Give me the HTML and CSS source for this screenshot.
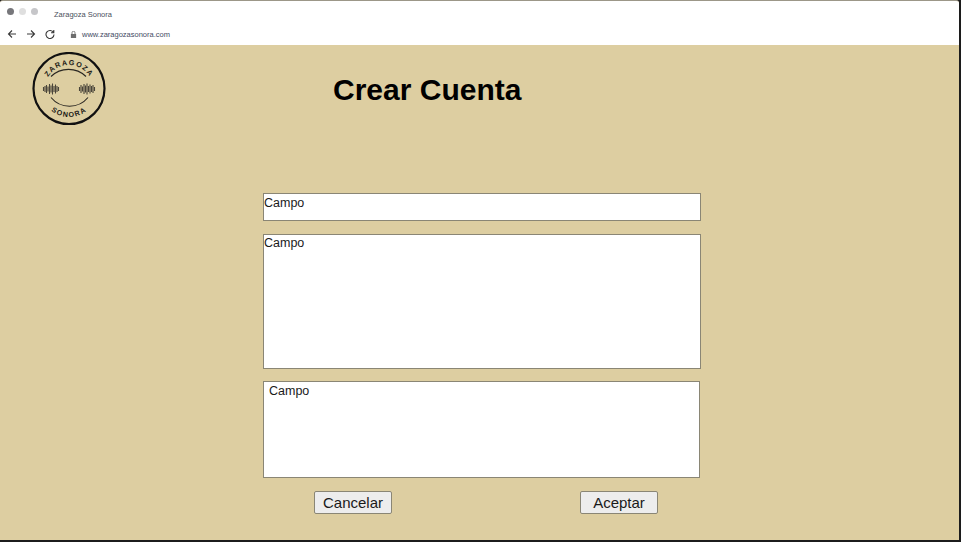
FILE: index.html
```html
<!DOCTYPE html>
<html lang="es">
<head>
<meta charset="utf-8">
<title>Zaragoza Sonora</title>
<link rel="stylesheet" href="styles.css">
</head>
<body>
<div class="window">
  <header class="chrome">
    <div class="tabbar">
      <div class="dots"><span class="dot dot-dark"></span><span class="dot"></span><span class="dot dot-mid"></span></div>
      <span class="tabtitle">Zaragoza Sonora</span>
    </div>
    <div class="urlbar">
      <svg class="navicon" viewBox="0 0 10 10"><path d="M9 5H1.500M5 1.500 1.500 5 5 8.500"/></svg>
      <svg class="navicon" viewBox="0 0 10 10"><path d="M1 5h7.500M5 1.500 8.500 5 5 8.500"/></svg>
      <svg class="navicon" viewBox="0 0 10 10"><path d="M8.500 3.500A4 4 0 1 0 9 5.500M8.800 1v2.800H6"/></svg>
      <svg class="lock" viewBox="0 0 8 8"><path class="lock-body" d="M1 3.500h6V8H1z"/><path class="lock-bow" d="M2.300 3.500V2a1.700 1.700 0 0 1 3.400 0v1.500"/></svg>
      <span class="url">www.zaragozasonora.com</span>
    </div>
  </header>
  <main class="page">
    <div class="head">
      <svg class="logo" viewBox="0 0 74 74">
        <defs>
          <path id="arc-top" d="M13 37a24 24 0 0 1 48 0"/>
          <path id="arc-bottom" d="M9 37a28 28 0 0 0 56 0"/>
        </defs>
        <circle class="ring" cx="37" cy="36.500" r="35.500"/>
        <text class="logotext"><textPath href="#arc-top" startOffset="50%" text-anchor="middle">ZARAGOZA</textPath></text>
        <text class="logotext"><textPath href="#arc-bottom" startOffset="50%" text-anchor="middle">SONORA</textPath></text>
        <path class="inner" d="M19 24.500A25 25 0 0 1 54 24.500M19 45.500A24 24 0 0 0 56 45.500"/>
        <path class="wave" d="M11.500 35v4M13 34v6M14.500 33v8M16 34.500v5M17.500 32v10M19 33.500v7M20.500 31.500v11M22 34v6M23.500 32.500v9M25 34v6M26.500 35v4M47.500 35v4M49 33v8M50.500 34.500v5M52 32v10M53.500 33.500v7M55 31.500v11M56.500 34v6M58 32.500v9M59.500 34v6M61 33v8M62.500 35v4"/>
      </svg>
      <h1 class="title">Crear Cuenta</h1>
    </div>
    <form class="form">
      <div class="field field-short">Campo</div>
      <div class="field field-tall">Campo</div>
      <div class="field field-mid">Campo</div>
      <div class="actions">
        <button class="btn" type="button">Cancelar</button>
        <button class="btn" type="button">Aceptar</button>
      </div>
    </form>
  </main>
</div>
</body>
</html>
```
FILE: styles.css
```css
* { box-sizing: border-box; }
html, body { margin: 0; height: 100%; overflow: hidden; }
body { font-family: "Liberation Sans", Arial, sans-serif; color: #111; background: #1c1c1c; }

.window {
  width: 959px;
  height: 540px;
  display: flex;
  flex-direction: column;
  background: #ddcea1;
  border-top: 1px solid #9c9788;
  border-radius: 3px 3px 0 0;
  overflow: hidden;
}

.chrome { height: 44px; background: #fff; flex: none; }
.tabbar { height: 23px; display: flex; align-items: center; padding-left: 7px; }
.dots { display: flex; gap: 5px; width: 47px; margin-top: -2px; }
.dot { width: 7px; height: 7px; border-radius: 50%; background: #dfdfdf; }
.dot-dark { background: #77777b; }
.dot-mid { background: #c6c6c9; }
.tabtitle { font-size: 7.500px; color: #4a4f5c; margin-top: 4px; }

.urlbar { height: 20px; display: flex; align-items: center; padding-left: 7px; }
.navicon { width: 10px; height: 10px; margin-right: 9px; fill: none; stroke: #3a3a3a; stroke-width: 1.100; }
.lock { width: 7px; height: 7px; margin-left: 6px; margin-right: 5px; }
.lock-body { fill: #6d6d6d; }
.lock-bow { fill: none; stroke: #6d6d6d; }
.url { font-size: 7.500px; color: #3f4a63; }

.page { flex: 1; min-height: 0; display: flex; flex-direction: column; }

.head { display: flex; align-items: flex-start; height: 148px; padding: 7px 0 0 32px; flex: none; }
.logo { width: 74px; height: 74px; flex: none; }
.ring { fill: none; stroke: #111; stroke-width: 2.200; }
.inner { fill: none; stroke: #2a2722; stroke-width: 1.100; }
.wave { fill: none; stroke: #4a453a; stroke-width: 1.100; }
.logotext { font-size: 7.200px; font-weight: 700; letter-spacing: 1.200px; fill: #1c1a16; }
.title { margin: 20px 0 0 227px; font-size: 30px; line-height: 36px; font-weight: 700; color: #000; }

.form { width: 438px; margin-left: 263px; display: flex; flex-direction: column; }
.field {
  background: #fff;
  border: 1px solid #8a8675;
  font-size: 12.500px;
  line-height: 16px;
  color: #1a1a1a;
}
.field-short { height: 28px; padding-top: 1px; }
.field-tall { height: 135px; margin-top: 13px; }
.field-mid { height: 97px; width: 437px; margin-top: 12px; padding: 1px 0 0 5px; }

.actions { display: flex; justify-content: space-between; margin-top: 13px; padding: 0 43px 0 51px; }
.btn {
  width: 78px;
  height: 23px;
  padding: 0;
  background: #ededed;
  border: 1px solid #8a8675;
  border-radius: 2px;
  font: 15px "Liberation Sans", Arial, sans-serif;
  color: #1a1a1a;
}
```
